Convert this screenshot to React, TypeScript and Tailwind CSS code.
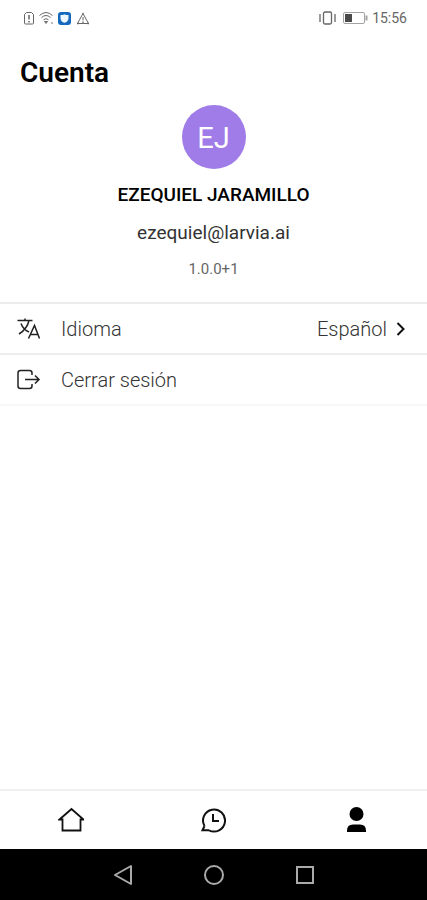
import type { ReactNode } from 'react';

const user = {
  initials: 'EJ',
  name: 'EZEQUIEL JARAMILLO',
  email: 'ezequiel@larvia.ai',
};

function StatusBar() {
  return (
    <div className="flex h-9 items-center justify-between pl-[23px] pr-5 text-[#666]">
      <div className="flex items-center gap-1">
        <svg width="12" height="14" viewBox="0 0 12 14" fill="none" stroke="currentColor">
          <path d="M3.5 1.5h5l2 2v8.500q0 1-1 1h-7q-1 0-1-1V3.500z" />
          <path d="M6 4v4.500M6 10v1.500" strokeWidth="1.500" />
        </svg>
        <svg width="15" height="14" viewBox="0 0 15 14" fill="none" stroke="currentColor">
          <path d="M.5 4.500Q7 -1.500 13.500 4.500M2.500 6.500Q7 2.500 11.500 6.500M4.500 8.800Q7 6.500 9.500 8.800" />
          <path d="M5.500 10.500h3L7 12.500z" />
          <circle cx="13" cy="12" r=".8" fill="currentColor" stroke="none" />
        </svg>
        <svg width="13" height="13" viewBox="0 0 13 13">
          <rect width="13" height="13" rx="3" fill="#1668bd" />
          <path d="M6.500 2.200c1.200.8 2.600.7 4 .9v3.100c0 2.300-1.700 3.900-4 4.600-2.300-.7-4-2.300-4-4.600V3.100c1.400-.2 2.800-.1 4-.9z" fill="#eef6ff" />
        </svg>
        <svg className="ml-px" width="14" height="13" viewBox="0 0 14 13" fill="none" stroke="currentColor">
          <path d="M7 1.500 1.500 11.500h11zM7 5v3.500" />
          <path d="M7 9.500v1.200M1 11.500h1.500M11.500 11.500H13M6.500 1.500h1" strokeWidth="1.500" />
        </svg>
      </div>
      <div className="flex items-center gap-1">
        <svg width="17" height="14" viewBox="0 0 17 14" fill="none" stroke="currentColor">
          <rect x="4.500" y="1" width="8" height="12" rx="1.500" strokeWidth="1.300" />
          <path d="M1 3v8M16 3v8" strokeWidth="1.300" />
        </svg>
        <svg className="ml-[3px]" width="25" height="12" viewBox="0 0 25 12" fill="none" stroke="#a3a3a3">
          <rect x=".5" y=".5" width="21" height="11" rx="1.500" />
          <path d="M23.500 3.500v5" strokeWidth="2" />
          <path d="M2 2h7v8H2z" fill="#4a4a4a" stroke="none" />
        </svg>
        <span className="text-sm">15:56</span>
      </div>
    </div>
  );
}

function MenuRow({ icon, label, children }: { icon: ReactNode; label: string; children?: ReactNode }) {
  return (
    <button type="button" className="flex h-[51px] w-full items-center border-t-2 border-[#ececec] pl-4 pr-5 text-xl font-light text-[#333]">
      {icon}
      <span className="ml-5">{label}</span>
      {children}
    </button>
  );
}

const TranslateIcon = () => (
  <svg width="25" height="24" viewBox="0 0 25 24" fill="none" stroke="#222" strokeWidth="1.500">
    <path d="M1.500 3.500h15M9 1.500v2M5 6.500c1.500 4 4.500 7 8 8.500M13 3.500c-1 5-4.500 10-10 13.500" />
    <path d="M12.500 21.500 18.500 8.500l5 13M14.500 17.500h7.500" />
  </svg>
);

const LogoutIcon = () => (
  <svg width="25" height="24" viewBox="0 0 25 24" fill="none" stroke="#222" strokeWidth="1.500">
    <path d="M16 7V5q0-2.500-2.500-2.500h-9Q2 2.500 2 5v13q0 2.500 2.500 2.500h9q2.500 0 2.500-2.500v-2" />
    <path d="M9 11.500h14M19 7.500l4 4-4 4" />
  </svg>
);

const tabs = [
  {
    label: 'Inicio',
    icon: (
      <svg width="26" height="26" viewBox="0 0 26 26" fill="none" stroke="#111" strokeWidth="1.800">
        <path d="M1.500 12.500h3v11h18v-11h3L13.500 2z" />
      </svg>
    ),
  },
  {
    label: 'Historial',
    icon: (
      <svg width="26" height="26" viewBox="0 0 26 26" fill="none" stroke="#111" strokeWidth="2">
        <path d="M4.500 19A11 11 0 1 1 9 23.300M9 23.300H2.500l2-4.300" />
        <path d="M13 7v7h6" />
      </svg>
    ),
  },
  {
    label: 'Cuenta',
    icon: (
      <svg width="26" height="26" viewBox="0 0 26 26" fill="#000">
        <circle cx="13.500" cy="7" r="7" />
        <path d="M4 25v-1.500q0-6 6-6h7q6 0 6 6V25z" />
      </svg>
    ),
  },
];

export default function App() {
  return (
    <div className="flex min-h-screen flex-col bg-white font-[Roboto,sans-serif] text-black">
      <StatusBar />

      <main className="flex-1">
        <h1 className="mt-[17px] px-5 text-[28px] leading-10 font-semibold">Cuenta</h1>

        <section className="mt-3 flex flex-col items-center">
          <div className="flex size-16 items-center justify-center rounded-full bg-[#a07ce8] pt-1 text-[29px] text-white">
            {user.initials}
          </div>
          <p className="mt-3 text-[19px] leading-7 font-medium">{user.name}</p>
          <p className="mt-2.5 text-[19px] leading-7 text-[#333]">{user.email}</p>
          <p className="mt-3 text-[15px] leading-5 text-[#666]">1.0.0+1</p>
        </section>

        <div className="mt-[23px] border-b-2 border-[#f7f7f7]">
          <MenuRow icon={<TranslateIcon />} label="Idioma">
            <span className="ml-auto">Español</span>
            <svg className="ml-2" width="12" height="16" viewBox="0 0 12 16" fill="none" stroke="#111" strokeWidth="2">
              <path d="m2.500 2 6 6-6 6" />
            </svg>
          </MenuRow>
          <MenuRow icon={<LogoutIcon />} label="Cerrar sesión" />
        </div>
      </main>

      <nav className="grid h-[60px] grid-cols-3 border-t-2 border-[#f0f0f0]">
        {tabs.map(tab => (
          <button key={tab.label} type="button" aria-label={tab.label} className="flex items-center justify-center">
            {tab.icon}
          </button>
        ))}
      </nav>

      <div className="flex h-[51px] items-center justify-center gap-[69px] bg-black">
        <button type="button" aria-label="Atrás">
          <svg width="22" height="22" viewBox="0 0 22 22" fill="none" stroke="#aaa" strokeWidth="2" strokeLinejoin="round">
            <path d="M19 2v18L3 11z" />
          </svg>
        </button>
        <button type="button" aria-label="Pantalla principal">
          <svg width="22" height="22" viewBox="0 0 22 22" fill="none" stroke="#aaa" strokeWidth="2">
            <circle cx="11" cy="11" r="9" />
          </svg>
        </button>
        <button type="button" aria-label="Recientes">
          <svg width="22" height="22" viewBox="0 0 22 22" fill="none" stroke="#aaa" strokeWidth="2">
            <rect x="3" y="3" width="16" height="16" />
          </svg>
        </button>
      </div>
    </div>
  );
}
